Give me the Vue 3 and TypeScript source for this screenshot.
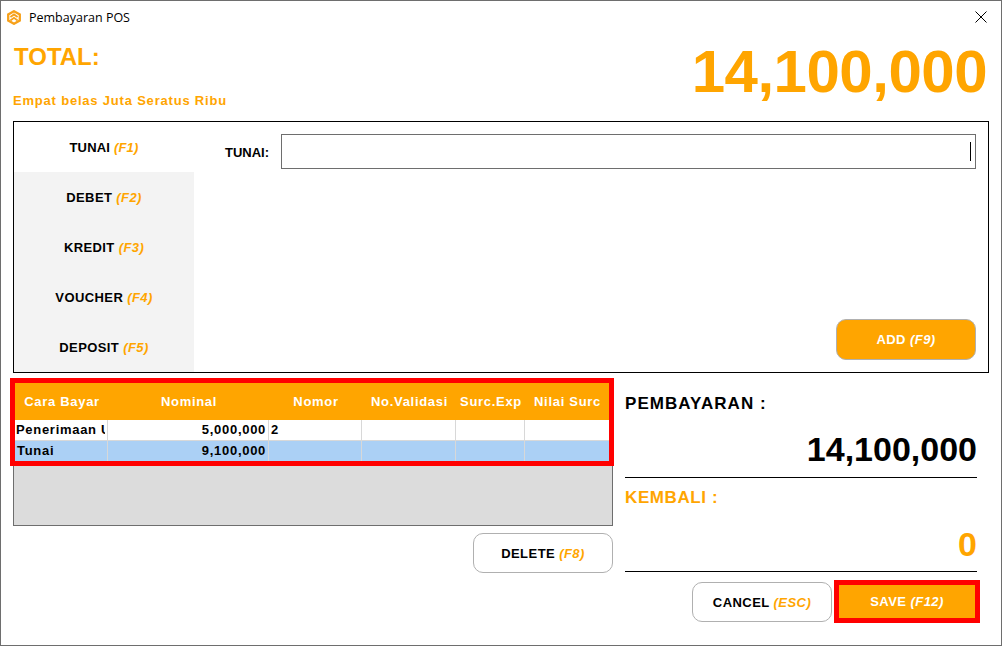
<script setup lang="ts">
interface Tab {
  label: string
  key: string
}

interface Row {
  cara: string
  nominal: string
  nomor: string
}

const tabs: Tab[] = [
  { label: 'TUNAI', key: 'F1' },
  { label: 'DEBET', key: 'F2' },
  { label: 'KREDIT', key: 'F3' },
  { label: 'VOUCHER', key: 'F4' },
  { label: 'DEPOSIT', key: 'F5' },
]

const columns = ['Cara Bayar', 'Nominal', 'Nomor', 'No.Validasi', 'Surc.Exp', 'Nilai Surc']

const rows: Row[] = [
  { cara: 'Penerimaan Uang Muka', nominal: '5,000,000', nomor: '2' },
  { cara: 'Tunai', nominal: '9,100,000', nomor: '' },
]
</script>

<template>
  <div class="window">
    <div class="titlebar">
      <svg class="logo" viewBox="0 0 14 15" width="14" height="15">
        <path d="M7 1.2 L12.8 4.4 V10.6 L7 13.8 L1.2 10.6 V4.4 Z" fill="#fff" stroke="#f7a11a" stroke-width="2.3" />
        <path d="M3.4 7 L7 4.4 L10.6 7 M3.4 10.4 L7 7.8 L10.6 10.4" fill="none" stroke="#f7a11a" stroke-width="1.9" />
      </svg>
      <span class="title">Pembayaran POS</span>
      <svg class="close" viewBox="0 0 12 12" width="12" height="12">
        <path d="M0.5 0.5 L11.5 11.5 M11.5 0.5 L0.5 11.5" stroke="#000" stroke-width="1" fill="none" />
      </svg>
    </div>

    <div class="summary">
      <div class="summary-left">
        <div class="total-label">TOTAL:</div>
        <div class="terbilang">Empat belas Juta Seratus Ribu</div>
      </div>
      <div class="total-value">14,100,000</div>
    </div>

    <div class="panel">
      <div class="tabs">
        <div v-for="(tab, i) in tabs" :key="tab.key" class="tab" :class="{ active: i === 0 }">
          {{ tab.label }} <em>({{ tab.key }})</em>
        </div>
      </div>
      <div class="tab-body">
        <div class="field-row">
          <label>TUNAI:</label>
          <div class="field"><span class="caret"></span></div>
        </div>
        <button class="btn primary add">ADD <em>(F9)</em></button>
      </div>
    </div>

    <div class="bottom">
      <div class="left-col">
        <div class="grid-box">
          <div class="highlight">
            <table>
              <colgroup>
                <col style="width: 93px" />
                <col style="width: 161px" />
                <col style="width: 93px" />
                <col style="width: 94px" />
                <col style="width: 69px" />
                <col style="width: 84px" />
              </colgroup>
              <thead>
                <tr>
                  <th v-for="c in columns" :key="c">{{ c }}</th>
                </tr>
              </thead>
              <tbody>
                <tr v-for="(r, i) in rows" :key="r.cara" :class="{ selected: i === 1 }">
                  <td><div class="clip">{{ r.cara }}</div></td>
                  <td class="num">{{ r.nominal }}</td>
                  <td class="nomor">{{ r.nomor }}</td>
                  <td></td>
                  <td></td>
                  <td></td>
                </tr>
              </tbody>
            </table>
          </div>
        </div>
        <button class="btn delete">DELETE <em>(F8)</em></button>
      </div>

      <div class="right-col">
        <div class="bayar-label">PEMBAYARAN :</div>
        <div class="bayar-value">14,100,000</div>
        <div class="kembali-label">KEMBALI :</div>
        <div class="kembali-value">0</div>
        <div class="actions">
          <button class="btn cancel">CANCEL <em>(ESC)</em></button>
          <div class="save-mark">
            <button class="btn primary save">SAVE <em>(F12)</em></button>
          </div>
        </div>
      </div>
    </div>
  </div>
</template>

<style>
html,
body {
  margin: 0;
  background: #fff;
}
</style>

<style scoped>
.window {
  box-sizing: border-box;
  width: 1002px;
  height: 646px;
  border: 1px solid #6e6e6e;
  background: #fff;
  font-family: 'Liberation Sans', Arial, sans-serif;
  overflow: hidden;
}

.titlebar {
  display: flex;
  align-items: center;
  height: 32px;
  padding: 0 14px 0 6px;
}

.logo {
  flex: none;
}

.title {
  margin-left: 8px;
  font-family: 'Open Sans', 'Noto Sans', sans-serif;
  font-size: 12.5px;
  color: #000;
}

.close {
  margin-left: auto;
}

.summary {
  display: flex;
  justify-content: space-between;
  height: 88px;
  padding: 0 14px 0 12px;
}

.total-label {
  margin: 10px 0 0 1px;
  font-size: 24px;
  line-height: 28px;
  font-weight: bold;
  color: #ffa500;
}

.terbilang {
  margin-top: 22px;
  font-size: 13px;
  line-height: 16px;
  font-weight: bold;
  letter-spacing: 0.8px;
  color: #ffa500;
}

.total-value {
  font-size: 60px;
  line-height: 78px;
  font-weight: bold;
  letter-spacing: -0.5px;
  color: #ffa500;
}

.panel {
  display: flex;
  box-sizing: border-box;
  height: 252px;
  margin: 0 12px;
  border: 1px solid #000;
}

.tabs {
  flex: none;
  width: 180px;
  background: #f3f3f3;
}

.tab {
  height: 50px;
  line-height: 52px;
  text-align: center;
  font-size: 13px;
  font-weight: bold;
  letter-spacing: 0.4px;
  color: #000;
}

.tab.active {
  background: #fff;
  letter-spacing: 0.2px;
}

em {
  font-style: italic;
  color: #ffa500;
}

.tab-body {
  flex: 1;
  display: flex;
  flex-direction: column;
  padding: 12px 12px 12px 31px;
}

.field-row {
  display: flex;
  align-items: center;
  gap: 12px;
}

.field-row label {
  width: 44px;
  font-size: 13px;
  font-weight: bold;
  padding-top: 2px;
}

.field {
  flex: 1;
  box-sizing: border-box;
  height: 35px;
  border: 1px solid #6e6e6e;
  display: flex;
  justify-content: flex-end;
  align-items: center;
  padding-right: 4px;
}

.caret {
  width: 1px;
  height: 19px;
  background: #000;
}

.btn {
  box-sizing: border-box;
  width: 140px;
  border: 1px solid #b0b0b0;
  border-radius: 10px;
  background: #fff;
  font-family: inherit;
  font-size: 13px;
  font-weight: bold;
  letter-spacing: 0.45px;
  color: #000;
  padding: 0;
}

.btn.primary {
  background: #ffa500;
  color: #fff;
}

.btn.primary em {
  color: #fff;
}

.add {
  height: 41px;
  margin-top: auto;
  align-self: flex-end;
  margin-bottom: 0;
}

.bottom {
  display: flex;
  justify-content: space-between;
  padding: 0 24px 0 12px;
}

.left-col {
  width: 600px;
  display: flex;
  flex-direction: column;
}

.grid-box {
  box-sizing: border-box;
  height: 146px;
  margin-top: 7px;
  border: 1px solid #6e6e6e;
  background: #dcdcdc;
}

.highlight {
  margin: -3px -2px 0 -4px;
  border: 5px solid #f00;
}

table {
  width: 594px;
  table-layout: fixed;
  border-collapse: separate;
  border-spacing: 0;
  font-size: 13px;
  letter-spacing: 0.7px;
  font-weight: bold;
  color: #000;
  background: #fff;
}

th {
  height: 37px;
  padding: 0 0 0 1px;
  background: #ffa500;
  color: #fff;
  font-size: 13px;
  text-align: center;
  white-space: nowrap;
  overflow: hidden;
}

td {
  height: 20px;
  padding: 0 2px 0 1px;
  border-right: 1px solid #d8d8d8;
  border-bottom: 1px solid #d8d8d8;
  line-height: 20px;
}

tr:last-child td {
  border-bottom: 0;
  height: 20px;
}

td:last-child {
  border-right: 0;
}

.clip {
  white-space: nowrap;
  overflow: hidden;
}

.selected .clip {
  padding-left: 1px;
}

.num {
  text-align: right;
}

.nomor {
  padding-left: 2px;
}

.selected td {
  background: #abd0f5;
}

.delete {
  align-self: flex-end;
  height: 40px;
  margin-top: 7px;
}

.right-col {
  width: 352px;
  display: flex;
  flex-direction: column;
}

.bayar-label {
  margin-top: 21px;
  font-size: 17px;
  line-height: 20px;
  font-weight: bold;
  letter-spacing: 1.05px;
}

.bayar-value {
  margin-top: 8px;
  height: 56px;
  line-height: 54px;
  box-sizing: border-box;
  border-bottom: 1px solid #000;
  text-align: right;
  font-size: 34px;
  font-weight: bold;
}

.kembali-label {
  margin-top: 10px;
  font-size: 17px;
  line-height: 20px;
  font-weight: bold;
  letter-spacing: 0.6px;
  color: #ffa500;
}

.kembali-value {
  height: 64px;
  padding-top: 9px;
  line-height: 54px;
  box-sizing: border-box;
  border-bottom: 1px solid #000;
  text-align: right;
  font-size: 34px;
  font-weight: bold;
  color: #ffa500;
}

.actions {
  display: flex;
  justify-content: flex-end;
  align-items: flex-start;
  gap: 2px;
  margin-top: 8px;
  margin-right: -3px;
}

.cancel {
  height: 40px;
  margin-top: 2px;
}

.save-mark {
  border: 5px solid #f00;
}

.save {
  display: block;
  width: 136px;
  height: 33px;
  border: 0;
  border-radius: 0;
}
</style>
